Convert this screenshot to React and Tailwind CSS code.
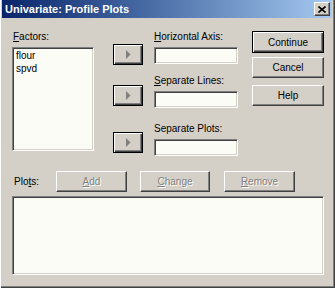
import React from "react";

const sunken =
  "border border-t-[#808080] border-l-[#808080] border-r-white border-b-white shadow-[inset_1px_1px_0_#404040,inset_-1px_-1px_0_#d4d0c8] bg-[#fcfcf6]";
const raised =
  "border border-t-white border-l-white border-r-[#404040] border-b-[#404040] shadow-[inset_-1px_-1px_0_#808080] bg-[#d4d0c8]";
const outlined =
  "border border-black shadow-[inset_1px_1px_0_#ffffff,inset_-1px_-1px_0_#404040,inset_-2px_-2px_0_#808080] bg-[#d4d0c8]";

function ArrowBtn({ className = "" }) {
  return (
    <div className={`w-[30px] h-[21px] flex items-center justify-center ${outlined} ${className}`}>
      <svg width="5" height="9" viewBox="0 0 5 9">
        <polygon points="0,0 4.5,4.5 0,9" fill="#808080" />
      </svg>
    </div>
  );
}

function U({ children }) {
  return <span className="underline decoration-1 underline-offset-[1px]">{children}</span>;
}

function Disabled({ children, className = "" }) {
  return (
    <div
      className={`h-[21px] flex items-center justify-center text-[#808080] [text-shadow:1px_1px_0_#ffffff] ${raised} ${className}`}
    >
      <span>{children}</span>
    </div>
  );
}

export default function App() {
  return (
    <div className="w-[335px] h-[288px] bg-[#d4d0c8] text-black text-[10px] leading-[13px] font-['Liberation_Sans',Arial,sans-serif] shadow-[inset_1px_0_0_#ffffff,inset_-1px_-1px_0_#404040,inset_-2px_-2px_0_#808080] overflow-hidden">
      {/* Title bar */}
      <div className="ml-[2px] mr-[3px] h-[18px] bg-linear-to-r from-[#0a246a] to-[#a6caf0] flex items-center pl-[3px] pr-[2px]">
        <span className="text-white font-bold text-[11px] leading-[14px] flex-1">Univariate: Profile Plots</span>
        <div className={`w-[16px] h-[14px] flex items-center justify-center ${raised}`}>
          <svg width="8" height="7" viewBox="0 0 8 7">
            <path d="M0.5 0.5 L7.5 6.5 M7.5 0.5 L0.5 6.5" stroke="#000" strokeWidth="1.6" />
          </svg>
        </div>
      </div>

      {/* Top area */}
      <div className="flex pl-[12px]">
        {/* Factors */}
        <div className="w-[82px] flex flex-col">
          <div className="mt-[12px] h-[13px] pl-[1px]">
            <U>F</U>actors:
          </div>
          <div className={`mt-[4px] h-[104px] ${sunken} pl-[3px] pt-[1px]`}>
            <div>flour</div>
            <div>spvd</div>
          </div>
        </div>

        {/* Arrow buttons */}
        <div className="ml-[19px] w-[30px] flex flex-col">
          <ArrowBtn className="mt-[26px]" />
          <ArrowBtn className="mt-[20px]" />
          <ArrowBtn className="mt-[26px]" />
        </div>

        {/* Fields */}
        <div className="ml-[11px] w-[84px] flex flex-col">
          <div className="mt-[12px] h-[13px]">
            <U>H</U>orizontal Axis:
          </div>
          <div className={`mt-[4px] h-[17px] ${sunken}`} />
          <div className="mt-[10px] h-[13px]">
            <U>S</U>eparate Lines:
          </div>
          <div className={`mt-[4px] h-[17px] ${sunken}`} />
          <div className="mt-[14px] h-[13px]">Separate Plots:</div>
          <div className={`mt-[4px] h-[17px] ${sunken}`} />
        </div>

        {/* Buttons */}
        <div className="ml-[14px] w-[72px] flex flex-col">
          <div className={`mt-[13px] h-[22px] flex items-center justify-center ${outlined}`}>Continue</div>
          <div className={`mt-[4px] h-[21px] flex items-center justify-center ${raised}`}>Cancel</div>
          <div className={`mt-[7px] h-[21px] flex items-center justify-center ${raised}`}>Help</div>
        </div>
      </div>

      {/* Plots row */}
      <div className="flex items-center mt-[15px] pl-[14px]">
        <div className="w-[42px]">
          Plo<U>t</U>s:
        </div>
        <Disabled className="w-[71px]">
          <U>A</U>dd
        </Disabled>
        <Disabled className="ml-[13px] w-[70px]">
          <U>C</U>hange
        </Disabled>
        <Disabled className="ml-[14px] w-[71px]">
          <U>R</U>emove
        </Disabled>
      </div>

      {/* Plots list */}
      <div className={`ml-[12px] mt-[4px] w-[312px] h-[79px] ${sunken}`} />
    </div>
  );
}
